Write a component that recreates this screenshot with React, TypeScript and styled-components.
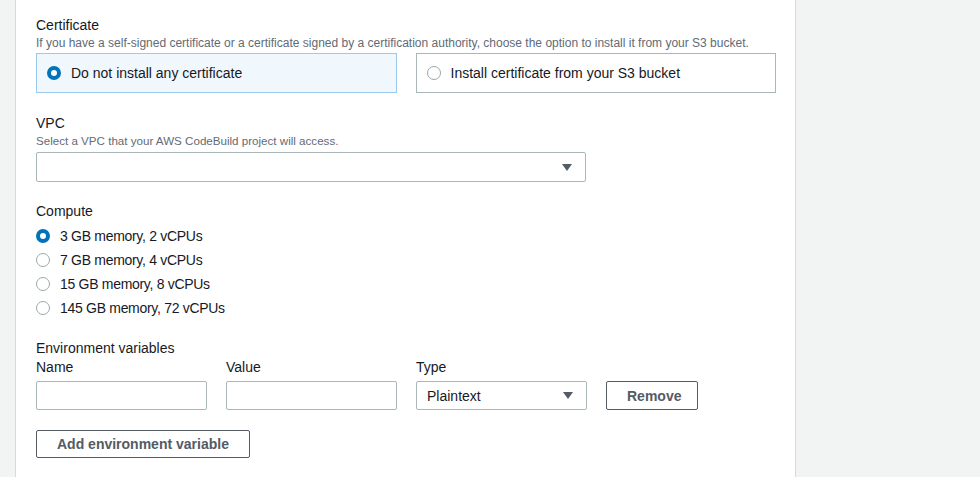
import * as React from "react";
import styled, { createGlobalStyle } from "styled-components";

const GlobalStyle = createGlobalStyle`
  html, body {
    margin: 0;
    padding: 0;
    height: 100%;
  }
  body {
    background: #f2f3f3;
    font-family: "Liberation Sans", Arial, sans-serif;
    color: #16191f;
  }
  #root {
    height: 100%;
  }
`;

const Page = styled.div`
  display: flex;
  height: 100%;
`;

const Panel = styled.main`
  margin-left: 15px;
  width: 781px;
  height: 100%;
  box-sizing: border-box;
  background: #ffffff;
  border-left: 1px solid #d5dbdb;
  border-right: 1px solid #d5dbdb;
  padding: 15px 19px 0 20px;
  overflow: hidden;
`;

const Section = styled.section<{ $top: number }>`
  margin-top: ${(p) => p.$top}px;
`;

const Label = styled.div`
  font-size: 14px;
  line-height: 20px;
`;

const Description = styled.div<{ $size: number }>`
  font-size: ${(p) => p.$size}px;
  line-height: 16px;
  color: #5f6b76;
`;

const TileGroup = styled.div`
  display: grid;
  grid-template-columns: 1fr 1fr;
  column-gap: 19px;
  margin-top: 2px;
`;

const Tile = styled.label<{ $selected: boolean }>`
  display: flex;
  align-items: center;
  gap: 10px;
  height: 40px;
  box-sizing: border-box;
  padding: 0 10px;
  font-size: 14px;
  background: ${(p) => (p.$selected ? "#f1f8fd" : "#ffffff")};
  border: 1px solid ${(p) => (p.$selected ? "#9dcaec" : "#aab7b8")};
  cursor: pointer;
`;

const Radio = styled.span<{ $checked: boolean }>`
  display: inline-block;
  width: 14px;
  height: 14px;
  box-sizing: border-box;
  border-radius: 50%;
  background: #ffffff;
  border: ${(p) => (p.$checked ? "4.5px solid #0073bb" : "1px solid #9ba7a9")};
  flex-shrink: 0;
`;

const Select = styled.div<{ $width: number; $height: number }>`
  display: flex;
  align-items: center;
  justify-content: space-between;
  width: ${(p) => p.$width}px;
  height: ${(p) => p.$height}px;
  box-sizing: border-box;
  padding: 0 13px 0 10px;
  border: 1px solid #aab7b8;
  border-radius: 2px;
  background: #ffffff;
  font-size: 14px;
`;

const SelectWrap = styled.div`
  margin-top: 3px;
`;

const RadioList = styled.div`
  margin-top: 3px;
  display: flex;
  flex-direction: column;
`;

const RadioRow = styled.label`
  display: flex;
  align-items: center;
  gap: 10px;
  height: 24px;
  font-size: 14px;
  line-height: 24px;
  letter-spacing: -0.3px;
`;

const EnvGrid = styled.div`
  display: grid;
  grid-template-columns: 171px 171px 171px 92px;
  column-gap: 19px;
  row-gap: 5px;
  align-items: end;
`;

const ColumnLabel = styled.div`
  font-size: 14px;
  line-height: 18px;
`;

const TextInput = styled.input`
  height: 29px;
  box-sizing: border-box;
  width: 100%;
  border: 1px solid #aab7b8;
  border-radius: 2px;
  padding: 0 10px;
  font: 14px "Liberation Sans", Arial, sans-serif;
  outline: none;
`;

const Button = styled.button<{ $height: number }>`
  height: ${(p) => p.$height}px;
  box-sizing: border-box;
  padding: 0 20px;
  background: #ffffff;
  border: 1px solid #545b64;
  border-radius: 2px;
  color: #545b64;
  font: bold 14px "Liberation Sans", Arial, sans-serif;
  cursor: pointer;
`;

const AddButton = styled(Button)`
  margin-top: 20px;
`;

const Caret = () => (
  <svg width="10" height="7" viewBox="0 0 10 7">
    <polygon points="0,0 10,0 5,7" fill="#545b64" />
  </svg>
);

const computeOptions = [
  "3 GB memory, 2 vCPUs",
  "7 GB memory, 4 vCPUs",
  "15 GB memory, 8 vCPUs",
  "145 GB memory, 72 vCPUs",
];

export default function App() {
  const [cert, setCert] = React.useState(0);
  const [compute, setCompute] = React.useState(0);

  return (
    <Page>
      <GlobalStyle />
      <Panel>
        <Section $top={0}>
          <Label>Certificate</Label>
          <Description $size={12}>
            If you have a self-signed certificate or a certificate signed by a
            certification authority, choose the option to install it from your
            S3 bucket.
          </Description>
          <TileGroup>
            <Tile $selected={cert === 0} onClick={() => setCert(0)}>
              <Radio $checked={cert === 0} />
              Do not install any certificate
            </Tile>
            <Tile $selected={cert === 1} onClick={() => setCert(1)}>
              <Radio $checked={cert === 1} />
              Install certificate from your S3 bucket
            </Tile>
          </TileGroup>
        </Section>

        <Section $top={20}>
          <Label>VPC</Label>
          <Description $size={11.6}>
            Select a VPC that your AWS CodeBuild project will access.
          </Description>
          <SelectWrap>
            <Select $width={550} $height={30}>
              <span />
              <Caret />
            </Select>
          </SelectWrap>
        </Section>

        <Section $top={19}>
          <Label>Compute</Label>
          <RadioList>
            {computeOptions.map((opt, i) => (
              <RadioRow key={opt} onClick={() => setCompute(i)}>
                <Radio $checked={compute === i} />
                {opt}
              </RadioRow>
            ))}
          </RadioList>
        </Section>

        <Section $top={18}>
          <Label>Environment variables</Label>
          <EnvGrid>
            <ColumnLabel>Name</ColumnLabel>
            <ColumnLabel>Value</ColumnLabel>
            <ColumnLabel>Type</ColumnLabel>
            <span />
            <TextInput />
            <TextInput />
            <Select $width={171} $height={29}>
              <span>Plaintext</span>
              <Caret />
            </Select>
            <Button $height={29}>Remove</Button>
          </EnvGrid>
          <AddButton $height={28}>Add environment variable</AddButton>
        </Section>
      </Panel>
    </Page>
  );
}
